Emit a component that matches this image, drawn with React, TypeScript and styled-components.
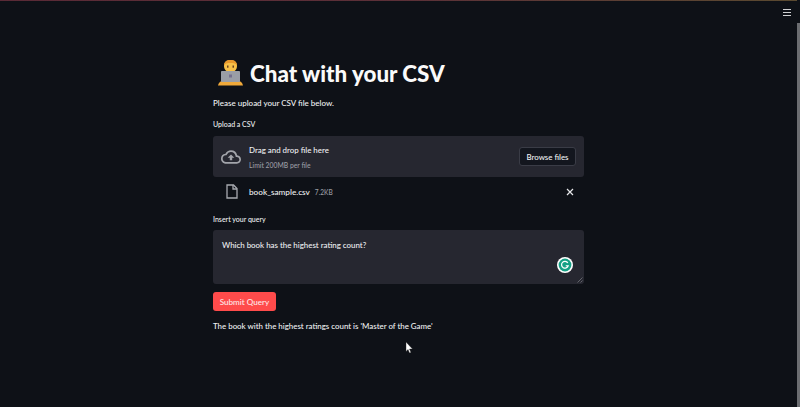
import React from "react";
import styled, { createGlobalStyle } from "styled-components";

const GlobalStyle = createGlobalStyle`
  html, body {
    margin: 0;
    height: 100%;
    overflow: hidden;
    background: #0e1117;
  }
  #root {
    height: 100%;
  }
`;

const Page = styled.div`
  position: relative;
  height: 407px;
  box-sizing: border-box;
  padding-right: 3px;
  overflow: hidden;
  background: #0e1117;
  color: #f0f1f3;
  font-family: Lato, "Noto Sans", sans-serif;
  font-weight: 500;
`;

const TopLine = styled.div`
  height: 1px;
  background: linear-gradient(90deg, #5a2a36, #5c3038 50%, #5a4a30);
`;

const MenuButton = styled.button`
  position: absolute;
  top: 9px;
  right: 9px;
  width: 8px;
  height: 7px;
  padding: 0;
  border: 0;
  background: repeating-linear-gradient(#d0d1d3 0 1px, #0e1117 1px 3px);
`;

const ScrollThumb = styled.div`
  position: absolute;
  top: 23px;
  right: 0;
  bottom: 0;
  width: 3px;
  background: #6b6d71;
`;

const Column = styled.main`
  width: 371px;
  margin: 0 auto;
  padding-top: 56px;
  display: flex;
  flex-direction: column;
`;

const Title = styled.h1`
  margin: 0 0 8px 5px;
  display: flex;
  align-items: center;
  gap: 7px;
  height: 32px;
  font-size: 22.4px;
  font-weight: 900;
  color: #fafafa;
`;

const Intro = styled.p`
  margin: 0 0 9px;
  font-size: 8px;
  line-height: 13px;
`;

const FieldLabel = styled.label`
  display: block;
  margin-bottom: 6px;
  font-size: 7px;
  line-height: 11px;
`;

const Dropzone = styled.section`
  height: 41px;
  box-sizing: border-box;
  padding: 0 8px;
  display: flex;
  align-items: center;
  background: #262730;
  border-radius: 3px;
`;

const ZoneText = styled.div`
  flex: 1;
  margin-left: 8px;
  display: flex;
  flex-direction: column;
  gap: 4px;
`;

const ZoneTitle = styled.span`
  font-size: 7.9px;
  line-height: 12px;
`;

const ZoneHint = styled.span`
  font-size: 6.8px;
  line-height: 10px;
  color: #9a9ca3;
`;

const BrowseButton = styled.button`
  width: 57px;
  height: 19px;
  padding: 0;
  background: #13161e;
  border: 1px solid #3a3c46;
  border-radius: 3px;
  color: #f0f1f3;
  font: 500 7.9px Lato, "Noto Sans", sans-serif;
`;

const FileRow = styled.div`
  height: 29px;
  margin-bottom: 8px;
  padding: 0 10px 0 13px;
  display: flex;
  align-items: center;
`;

const FileName = styled.span`
  margin-left: 11px;
  font-size: 8.2px;
`;

const FileSize = styled.span`
  margin-left: 5px;
  flex: 1;
  font-size: 6.6px;
  color: #9a9ca3;
`;

const QueryBox = styled.div`
  position: relative;
  height: 54px;
  margin-top: -1px;
  box-sizing: border-box;
  padding: 9px;
  background: #262730;
  border-radius: 3px;
  font-size: 7.9px;
  line-height: 13px;
`;

const GrammarlyBadge = styled.svg`
  position: absolute;
  right: 11px;
  bottom: 11px;
`;

const ResizeGrip = styled.svg`
  position: absolute;
  right: 1px;
  bottom: 1px;
`;

const SubmitButton = styled.button`
  align-self: flex-start;
  width: 63px;
  height: 19px;
  margin-top: 8px;
  padding: 0;
  border: 0;
  border-radius: 3px;
  background: #ff4b4b;
  color: #fdeaea;
  font: 500 8.15px Lato, "Noto Sans", sans-serif;
`;

const Answer = styled.p`
  margin: 9px 0 0;
  font-size: 7.9px;
  line-height: 13px;
`;

const Pointer = styled.svg`
  position: absolute;
  left: 405px;
  top: 341px;
`;

const TechnologistIcon = () => (
  <svg width="25" height="26" viewBox="0 0 25 26">
    <path d="M6 6c0-4 2.500-6 6.500-6S19 2 19 6c0 3.500-2.500 6.500-6.500 6.500S6 9.500 6 6z" fill="#f7c048" />
    <path d="M6 5.500C6 2 8.500 0 12.500 0S19 2 19 5.500C18 3.500 16 3 12.500 3S7 3.500 6 5.500z" fill="#e8982c" />
    <rect x="9" y="5.500" width="1.500" height="2.200" fill="#6b4320" />
    <rect x="14.500" y="5.500" width="1.500" height="2.200" fill="#6b4320" />
    <path d="M0 25.500c.5-2.500 2-4 4-4.500h17c2 .5 3.500 2 4 4.500z" fill="#f0a93a" />
    <rect x="3" y="11" width="19" height="11" rx="0.800" fill="#9a9ea6" />
    <rect x="11" y="14.500" width="3" height="3" fill="#75708e" />
  </svg>
);

const UploadIcon = () => (
  <svg width="20" height="20" viewBox="0 0 24 24" fill="#a3a5ab">
    <path d="M19.350 10.040A7.490 7.490 0 0 0 12 4C9.110 4 6.600 5.640 5.350 8.040A5.994 5.994 0 0 0 0 14c0 3.310 2.690 6 6 6h13c2.760 0 5-2.240 5-5 0-2.640-2.050-4.780-4.650-4.960zM19 18H6c-2.210 0-4-1.790-4-4 0-2.050 1.530-3.760 3.560-3.970l1.070-.11.500-.95A5.469 5.469 0 0 1 12 6c2.620 0 4.880 1.860 5.390 4.430l.300 1.500 1.530.11A2.980 2.980 0 0 1 22 15c0 1.650-1.350 3-3 3zM8 13h2.550v3h2.900v-3H16l-4-4z" />
  </svg>
);

const FileIcon = () => (
  <svg width="12" height="15" viewBox="0 0 12 15" fill="none" stroke="#a8aab0" strokeWidth="1.300">
    <path d="M1 1h6.500l3.500 3.500v9.500h-10z" />
    <path d="M7 1v4h4" />
  </svg>
);

const CloseIcon = () => (
  <svg width="8" height="8" viewBox="0 0 8 8" stroke="#e6e7ea" strokeWidth="1.200">
    <path d="M1 1l6 6M7 1l-6 6" />
  </svg>
);

export default function App() {
  return (
    <Page>
      <GlobalStyle />
      <TopLine />
      <MenuButton aria-label="Menu" />
      <ScrollThumb />
      <Column>
        <Title>
          <TechnologistIcon />
          Chat with your CSV
        </Title>
        <Intro>Please upload your CSV file below.</Intro>
        <FieldLabel>Upload a CSV</FieldLabel>
        <Dropzone>
          <UploadIcon />
          <ZoneText>
            <ZoneTitle>Drag and drop file here</ZoneTitle>
            <ZoneHint>Limit 200MB per file</ZoneHint>
          </ZoneText>
          <BrowseButton>Browse files</BrowseButton>
        </Dropzone>
        <FileRow>
          <FileIcon />
          <FileName>book_sample.csv</FileName>
          <FileSize>7.2KB</FileSize>
          <CloseIcon />
        </FileRow>
        <FieldLabel>Insert your query</FieldLabel>
        <QueryBox>
          Which book has the highest rating count?
          <GrammarlyBadge width="16" height="16" viewBox="0 0 17 17">
            <circle cx="8.500" cy="8.500" r="8.500" fill="#ffffff" />
            <circle cx="8.500" cy="8.500" r="6.800" fill="#15a085" />
            <path d="M11.500 6.300a3.600 3.600 0 1 0 .4 3h-2.600" fill="none" stroke="#ffffff" strokeWidth="1.300" />
          </GrammarlyBadge>
          <ResizeGrip width="6" height="6" viewBox="0 0 6 6" stroke="#7c7e85" strokeWidth="0.700">
            <path d="M0.500 5.500l5-5M3.500 5.500l2-2" />
          </ResizeGrip>
        </QueryBox>
        <SubmitButton>Submit Query</SubmitButton>
        <Answer>The book with the highest ratings count is 'Master of the Game'</Answer>
      </Column>
      <Pointer width="8" height="13" viewBox="0 0 8 13">
        <path d="M1 1v9.500l2-2 1.500 3.500 1.500-.6-1.500-3.400h3z" fill="#ffffff" stroke="#222" strokeWidth="0.400" />
      </Pointer>
    </Page>
  );
}
